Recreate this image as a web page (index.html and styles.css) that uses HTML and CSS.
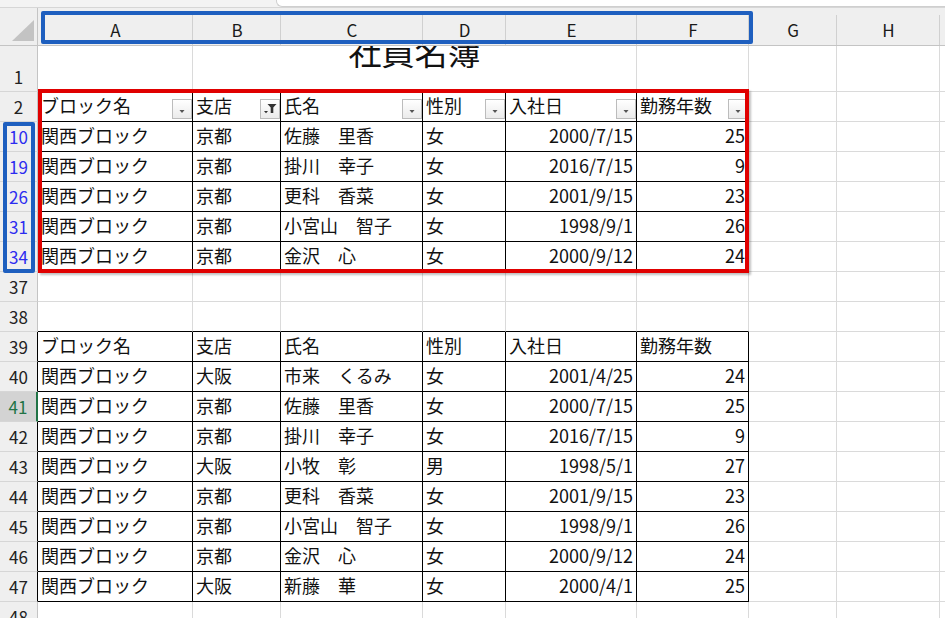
FILE: index.html
```html
<!DOCTYPE html>
<html lang="ja">
<head>
<meta charset="utf-8">
<title>社員名簿</title>
<link rel="stylesheet" href="styles.css">
</head>
<body>
<div class="app">
  <div class="topbar"><div class="fx"></div></div>
  <div class="sheet">
    <!-- column header -->
    <div class="corner"><svg width="37" height="37" viewBox="0 0 37 37"><polygon points="12,33 34,33 34,12" fill="#c3c3c3"/></svg></div>
    <div class="ch">A</div><div class="ch">B</div><div class="ch">C</div><div class="ch">D</div><div class="ch">E</div><div class="ch">F</div><div class="ch">G</div><div class="ch">H</div><div class="ch"></div>

    <!-- row 1 -->
    <div class="rh">1</div>
    <div class="c kb"></div>
    <div class="c kb title"><span class="tt">社員名簿</span></div>
    <div class="c kb"></div><div class="c"></div><div class="c"></div><div class="c"></div>

    <!-- row 2 -->
    <div class="rh">2</div>
    <div class="c k fh"><span>ブロック名</span><span class="fb"><svg width="18" height="18" viewBox="0 0 18 18"><path d="M6.5 10h5l-2.5 3z" fill="#555"/></svg></span></div>
    <div class="c k fh"><span>支店</span><span class="fb"><svg width="18" height="18" viewBox="0 0 18 18"><path d="M6.5 4h9l-3.2 3.6v5.4h-2.6v-5.4z" fill="#333"/><path d="M3 11h4l-2 2.2z" fill="#333"/></svg></span></div>
    <div class="c k fh"><span>氏名</span><span class="fb"><svg width="18" height="18" viewBox="0 0 18 18"><path d="M6.5 10h5l-2.5 3z" fill="#555"/></svg></span></div>
    <div class="c k fh"><span>性別</span><span class="fb"><svg width="18" height="18" viewBox="0 0 18 18"><path d="M6.5 10h5l-2.5 3z" fill="#555"/></svg></span></div>
    <div class="c k fh"><span>入社日</span><span class="fb"><svg width="18" height="18" viewBox="0 0 18 18"><path d="M6.5 10h5l-2.5 3z" fill="#555"/></svg></span></div>
    <div class="c k fh"><span>勤務年数</span><span class="fb"><svg width="18" height="18" viewBox="0 0 18 18"><path d="M6.5 10h5l-2.5 3z" fill="#555"/></svg></span></div>
    <div class="c"></div><div class="c"></div><div class="c"></div>

    <!-- row 10 -->
    <div class="rh f">10</div>
    <div class="c k">関西ブロック</div><div class="c k">京都</div><div class="c k">佐藤　里香</div><div class="c k">女</div><div class="c k r">2000/7/15</div><div class="c k r">25</div>
    <div class="c"></div><div class="c"></div><div class="c"></div>

    <!-- row 19 -->
    <div class="rh f">19</div>
    <div class="c k">関西ブロック</div><div class="c k">京都</div><div class="c k">掛川　幸子</div><div class="c k">女</div><div class="c k r">2016/7/15</div><div class="c k r">9</div>
    <div class="c"></div><div class="c"></div><div class="c"></div>

    <!-- row 26 -->
    <div class="rh f">26</div>
    <div class="c k">関西ブロック</div><div class="c k">京都</div><div class="c k">更科　香菜</div><div class="c k">女</div><div class="c k r">2001/9/15</div><div class="c k r">23</div>
    <div class="c"></div><div class="c"></div><div class="c"></div>

    <!-- row 31 -->
    <div class="rh f">31</div>
    <div class="c k">関西ブロック</div><div class="c k">京都</div><div class="c k">小宮山　智子</div><div class="c k">女</div><div class="c k r">1998/9/1</div><div class="c k r">26</div>
    <div class="c"></div><div class="c"></div><div class="c"></div>

    <!-- row 34 -->
    <div class="rh f">34</div>
    <div class="c k">関西ブロック</div><div class="c k">京都</div><div class="c k">金沢　心</div><div class="c k">女</div><div class="c k r">2000/9/12</div><div class="c k r">24</div>
    <div class="c"></div><div class="c"></div><div class="c"></div>

    <!-- row 37 -->
    <div class="rh">37</div>
    <div class="c"></div><div class="c"></div><div class="c"></div><div class="c"></div><div class="c"></div><div class="c"></div><div class="c"></div><div class="c"></div><div class="c"></div>

    <!-- row 38 -->
    <div class="rh">38</div>
    <div class="c kb"></div><div class="c kb"></div><div class="c kb"></div><div class="c kb"></div><div class="c kb"></div><div class="c kb"></div><div class="c"></div><div class="c"></div><div class="c"></div>

    <!-- row 39 -->
    <div class="rh k">39</div>
    <div class="c k">ブロック名</div><div class="c k">支店</div><div class="c k">氏名</div><div class="c k">性別</div><div class="c k">入社日</div><div class="c k">勤務年数</div>
    <div class="c"></div><div class="c"></div><div class="c"></div>

    <!-- row 40 -->
    <div class="rh k">40</div>
    <div class="c k">関西ブロック</div><div class="c k">大阪</div><div class="c k">市来　くるみ</div><div class="c k">女</div><div class="c k r">2001/4/25</div><div class="c k r">24</div>
    <div class="c"></div><div class="c"></div><div class="c"></div>

    <!-- row 41 -->
    <div class="rh sel">41</div>
    <div class="c k">関西ブロック</div><div class="c k">京都</div><div class="c k">佐藤　里香</div><div class="c k">女</div><div class="c k r">2000/7/15</div><div class="c k r">25</div>
    <div class="c"></div><div class="c"></div><div class="c"></div>

    <!-- row 42 -->
    <div class="rh k">42</div>
    <div class="c k">関西ブロック</div><div class="c k">京都</div><div class="c k">掛川　幸子</div><div class="c k">女</div><div class="c k r">2016/7/15</div><div class="c k r">9</div>
    <div class="c"></div><div class="c"></div><div class="c"></div>

    <!-- row 43 -->
    <div class="rh k">43</div>
    <div class="c k">関西ブロック</div><div class="c k">大阪</div><div class="c k">小牧　彰</div><div class="c k">男</div><div class="c k r">1998/5/1</div><div class="c k r">27</div>
    <div class="c"></div><div class="c"></div><div class="c"></div>

    <!-- row 44 -->
    <div class="rh k">44</div>
    <div class="c k">関西ブロック</div><div class="c k">京都</div><div class="c k">更科　香菜</div><div class="c k">女</div><div class="c k r">2001/9/15</div><div class="c k r">23</div>
    <div class="c"></div><div class="c"></div><div class="c"></div>

    <!-- row 45 -->
    <div class="rh k">45</div>
    <div class="c k">関西ブロック</div><div class="c k">京都</div><div class="c k">小宮山　智子</div><div class="c k">女</div><div class="c k r">1998/9/1</div><div class="c k r">26</div>
    <div class="c"></div><div class="c"></div><div class="c"></div>

    <!-- row 46 -->
    <div class="rh k">46</div>
    <div class="c k">関西ブロック</div><div class="c k">京都</div><div class="c k">金沢　心</div><div class="c k">女</div><div class="c k r">2000/9/12</div><div class="c k r">24</div>
    <div class="c"></div><div class="c"></div><div class="c"></div>

    <!-- row 47 -->
    <div class="rh k">47</div>
    <div class="c k">関西ブロック</div><div class="c k">大阪</div><div class="c k">新藤　華</div><div class="c k">女</div><div class="c k r">2000/4/1</div><div class="c k r">25</div>
    <div class="c"></div><div class="c"></div><div class="c"></div>

    <!-- row 48 -->
    <div class="rh">48</div>
    <div class="c"></div><div class="c"></div><div class="c"></div><div class="c"></div><div class="c"></div><div class="c"></div><div class="c"></div><div class="c"></div><div class="c"></div>
  </div>

  <div class="mark-cols"></div>
  <div class="mark-rows"></div>
  <div class="mark-filter"></div>
</div>
</body>
</html>
```

FILE: styles.css
```css
* { box-sizing: border-box; }

body {
  margin: 0;
  background: #fff;
  color: #000;
  font-family: "Noto Sans CJK JP", "Noto Sans", sans-serif;
}

.app {
  position: relative;
  width: 945px;
  height: 618px;
  overflow: hidden;
}

.topbar {
  height: 8px;
  display: flex;
  padding-left: 276px;
  background: #f3f3f3;
  border-bottom: 1px solid #d6d6d6;
}

.fx {
  flex: 1;
  height: 7px;
  background: #fff;
  border-left: 1px solid #cfcfcf;
  border-bottom: 1px solid #cfcfcf;
  border-bottom-left-radius: 6px;
}

.sheet {
  display: grid;
  grid-template-columns: 38px 155px 88px 142px 83px 131px 112px 88px 103px 1fr;
  grid-template-rows: 38px 46px;
  grid-auto-rows: 30px;
}

.corner {
  background: #efefef;
  border-right: 1px solid #c4c4c4;
  border-bottom: 1px solid #c4c4c4;
}
.corner svg { display: block; }

.ch {
  display: flex;
  justify-content: center;
  align-items: center;
  padding-top: 6px;
  font-size: 17px;
  line-height: 17px;
  color: #1a1a1a;
  background: linear-gradient(#d0d0d0, #d0d0d0) right bottom / 1px 30px no-repeat, #efefef;
  border-bottom: 1px solid #c4c4c4;
}

.rh {
  display: flex;
  justify-content: center;
  align-items: flex-end;
  padding-bottom: 6px;
  font-size: 17px;
  line-height: 17px;
  color: #222;
  background: #efefef;
  border-right: 1px solid #c4c4c4;
  border-bottom: 1px solid #d6d6d6;
}
.rh.f { color: #2c2cf0; }
.rh.k { border-right-color: #000; }
.rh.sel {
  background: #d3d3d3;
  color: #217346;
  border-right: 2px solid #217346;
}

.c {
  display: flex;
  align-items: center;
  padding: 0 3px 3px 3px;
  font-size: 18px;
  line-height: 18px;
  color: #111;
  white-space: nowrap;
  overflow: hidden;
  border-right: 1px solid #dadada;
  border-bottom: 1px solid #dadada;
}
.c.r { justify-content: flex-end; }
.c.k { border-right-color: #000; border-bottom-color: #000; }
.c.kb { border-bottom-color: #000; }

.c.fh {
  justify-content: space-between;
  padding-right: 0;
  padding-bottom: 2px;
}
.c.fh > span:first-child { margin-bottom: 1px; }

.fb {
  align-self: flex-end;
  flex: none;
  width: 20px;
  height: 20px;
  border: 1px solid #bcbcbc;
  background: linear-gradient(#ffffff, #ebebeb);
}
.fb svg { display: block; }

.title {
  grid-column: span 4;
  justify-content: center;
  align-items: flex-start;
  padding: 0;
  font-size: 33px;
  line-height: 33px;
}
.tt { margin-top: -11px; }

.mark-cols,
.mark-rows,
.mark-filter {
  position: absolute;
}

.mark-cols {
  left: 41px;
  top: 11px;
  width: 712px;
  height: 33px;
  border: 4px solid #1e5fbf;
  border-radius: 2px;
}

.mark-rows {
  left: 3px;
  top: 122px;
  width: 32px;
  height: 151px;
  border: 4px solid #1e5fbf;
  border-radius: 2px;
}

.mark-filter {
  left: 38px;
  top: 89px;
  width: 711px;
  height: 184px;
  border: 4px solid #e00000;
  box-shadow: 2px 2px 2px rgba(0, 0, 0, 0.25);
}
```
